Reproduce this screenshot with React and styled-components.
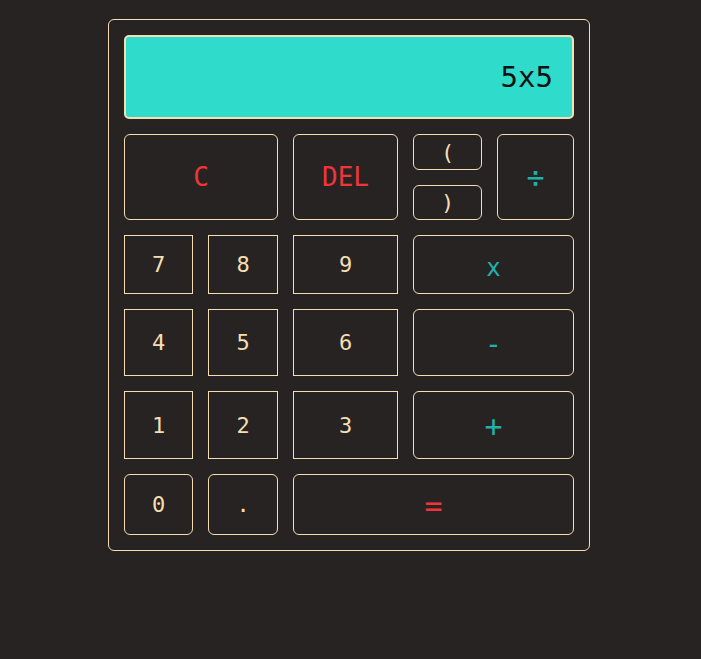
import React from 'react';
import styled, { createGlobalStyle } from 'styled-components';

const GlobalStyle = createGlobalStyle`
  html, body {
    margin: 0;
    background: #272322;
    min-height: 100%;
  }
  body {
    font-family: 'DejaVu Sans Mono', 'Liberation Mono', monospace;
  }
`;

const Page = styled.div`
  display: flex;
  justify-content: center;
  align-items: flex-start;
  padding: 19px 3px 0 0;
  min-height: 640px;
`;

const Calculator = styled.div`
  width: 450px;
  padding: 15px;
  border: 1px solid #f5deb3;
  border-radius: 6px;
  display: flex;
  flex-direction: column;
  gap: 15px;
`;

const Screen = styled.div`
  height: 80px;
  background: #2fdbca;
  border: 2px solid #f5deb3;
  border-radius: 5px;
  display: flex;
  align-items: center;
  justify-content: flex-end;
  padding-right: 19px;
  font-size: 29px;
  color: #111;
`;

const Keys = styled.div`
  display: grid;
  grid-template-columns: 69px 70px 105px 69px 77px;
  grid-template-rows: 36px 35px 59px 67px 68px 61px;
  gap: 15px;
`;

const colors = {
  num: '#f5deb3',
  red: '#f0353a',
  op: '#1fb2aa',
};

const Key = styled.button`
  box-sizing: border-box;
  background: transparent;
  border: 1px solid #f5deb3;
  border-radius: ${p => (p.$square ? '0' : '6px')};
  color: ${p => colors[p.$kind || 'num']};
  font-family: 'DejaVu Sans Mono', 'Liberation Mono', monospace;
  font-size: ${p => p.$size || 22}px;
  padding: ${p => p.$drop || 0}px 0 0;
  display: flex;
  align-items: center;
  justify-content: center;
  grid-column: ${p => p.$col || 'auto'};
  grid-row: ${p => p.$row || 'auto'};
  cursor: pointer;
`;

export default function App() {
  return (
    <>
      <GlobalStyle />
      <Page>
        <Calculator>
          <Screen>5x5</Screen>
          <Keys>
            <Key $kind="red" $size={26} $col="1 / 3" $row="1 / 3">C</Key>
            <Key $kind="red" $size={26} $col="3" $row="1 / 3">DEL</Key>
            <Key $size={22} $col="4" $row="1">(</Key>
            <Key $size={22} $col="4" $row="2">)</Key>
            <Key $kind="op" $size={30} $col="5" $row="1 / 3">÷</Key>

            <Key $square>7</Key>
            <Key $square>8</Key>
            <Key $square>9</Key>
            <Key $kind="op" $size={24} $drop={6} $col="4 / 6">x</Key>

            <Key $square>4</Key>
            <Key $square>5</Key>
            <Key $square>6</Key>
            <Key $kind="op" $size={28} $drop={4} $col="4 / 6">-</Key>

            <Key $square>1</Key>
            <Key $square>2</Key>
            <Key $square>3</Key>
            <Key $kind="op" $size={30} $drop={3} $col="4 / 6">+</Key>

            <Key>0</Key>
            <Key>.</Key>
            <Key $kind="red" $size={30} $drop={2} $col="3 / 6">=</Key>
          </Keys>
        </Calculator>
      </Page>
    </>
  );
}
